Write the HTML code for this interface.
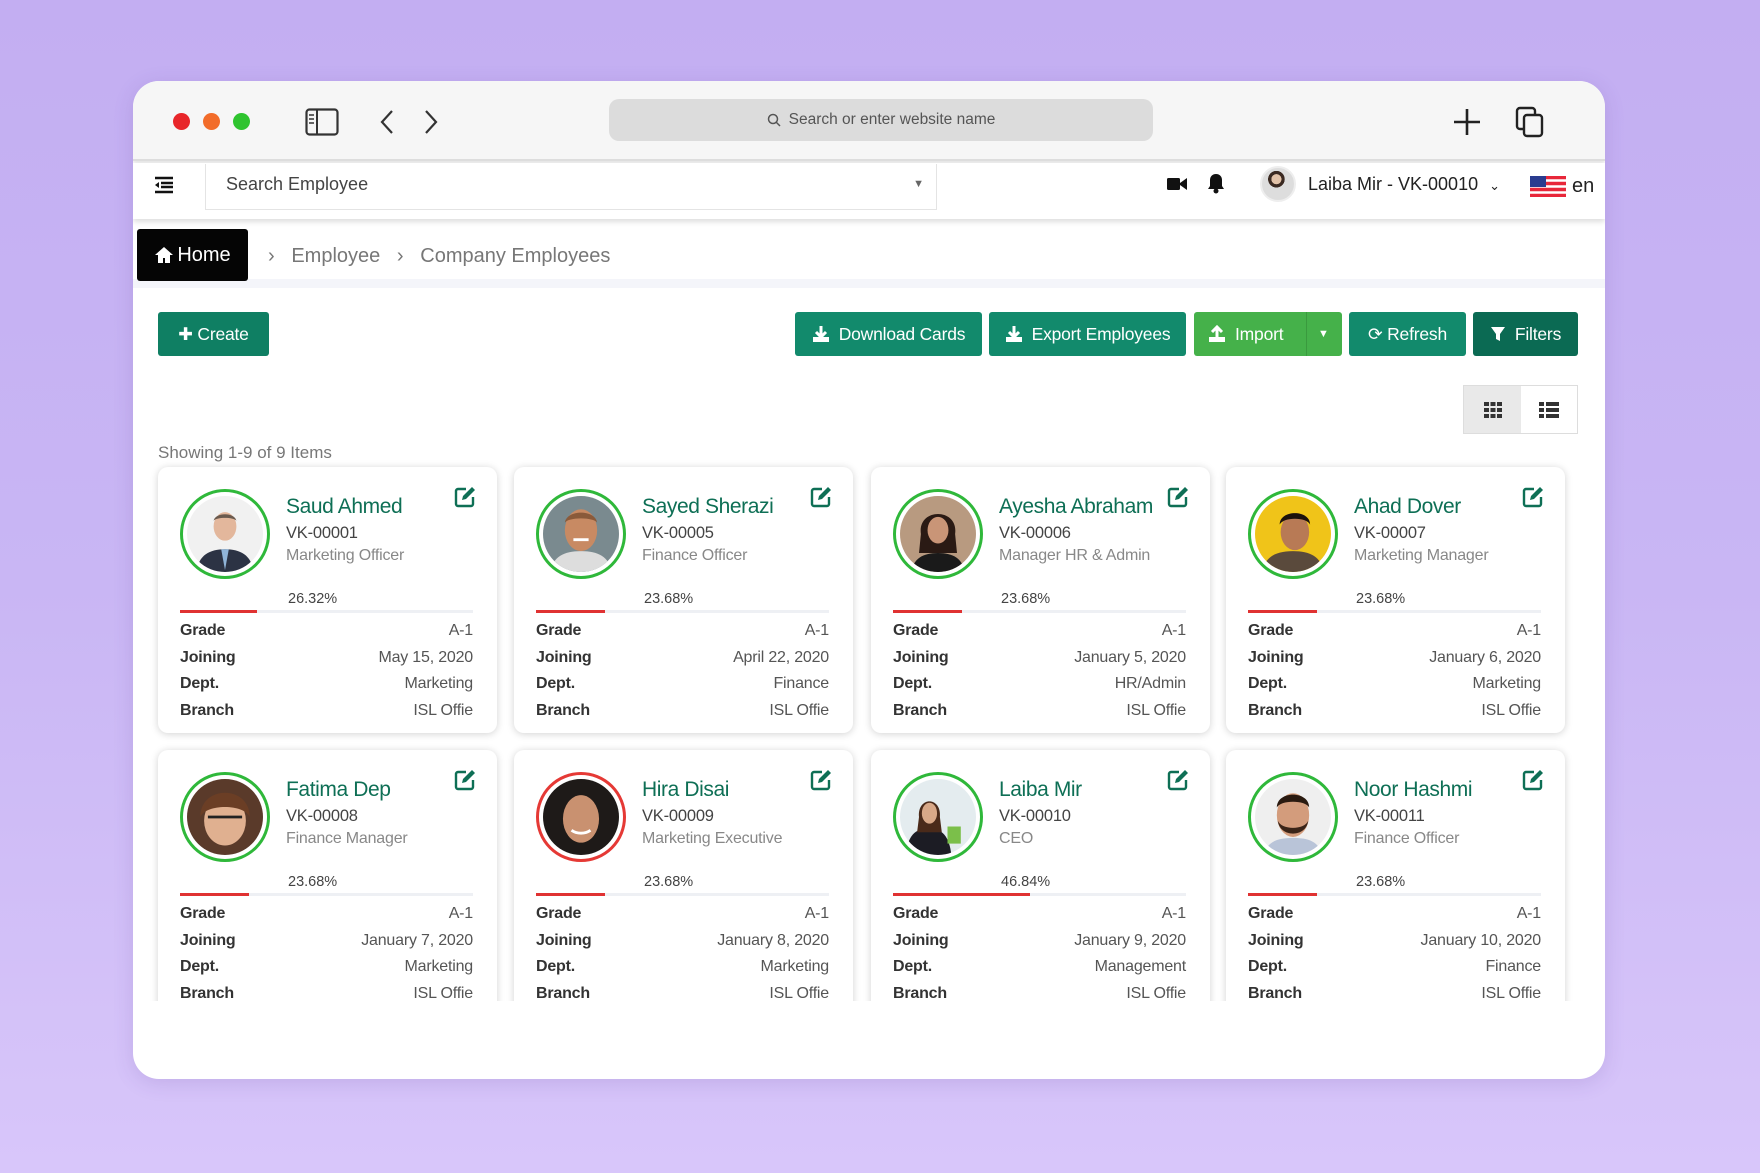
<!DOCTYPE html>
<html><head><meta charset="utf-8">
<style>
*{margin:0;padding:0;box-sizing:border-box}
body{width:1760px;height:1173px;overflow:hidden;position:relative;font-family:"Liberation Sans",sans-serif;background:linear-gradient(180deg,#c3aef2 0%,#c9b6f4 50%,#d8c6fa 100%)}
.abs{position:absolute}
.win{position:absolute;left:133px;top:81px;width:1472px;height:998px;background:#fff;border-radius:26px;overflow:hidden;box-shadow:0 4px 20px rgba(80,50,140,.15)}
.tb{position:absolute;left:0;top:0;width:100%;height:80px;background:#f6f6f6;border-bottom:2px solid #ddd;box-shadow:0 2px 4px rgba(0,0,0,.12)}
.dot{position:absolute;width:17px;height:17px;border-radius:50%;top:32px}
.nav{position:absolute;left:0;top:82px;width:100%;height:56px;background:#fff;box-shadow:0 3px 5px rgba(0,0,0,.13)}
.btn{position:absolute;top:231px;height:44px;background:#128a6c;color:#fff;font-size:17.5px;letter-spacing:-0.2px;border-radius:3px;display:flex;align-items:center;justify-content:center;gap:9px}
.card{position:absolute;width:339px;height:266px;background:#fff;border-radius:10px;box-shadow:0 1px 8px rgba(0,0,0,.18)}
.av{position:absolute;left:22px;top:22px;width:90px;height:90px;border-radius:50%;border:3px solid #2fb83a;overflow:hidden;background:#fff;padding:4px}
.av.red{border-color:#e53935}
.av svg{width:100%;height:100%;border-radius:50%;display:block}
.nm{position:absolute;left:128px;top:28px;font-size:21px;letter-spacing:-0.4px;color:#0e6f55}
.id{position:absolute;left:128px;top:57px;font-size:16.5px;letter-spacing:-0.2px;color:#444}
.tt{position:absolute;left:128px;top:80px;font-size:16px;letter-spacing:-0.2px;color:#888}
.ed{position:absolute;left:296px;top:19px}
.pc{position:absolute;left:130px;top:124px;font-size:14.5px;color:#444}
.bar{position:absolute;left:22px;top:143px;width:293px;height:3px;background:#eef0f4}
.bar i{display:block;height:3px;background:#e03232}
.row{position:absolute;left:22px;width:293px;font-size:16px;letter-spacing:-0.2px;display:flex;justify-content:space-between;margin-top:3px}
.row b{font-weight:bold;color:#333}
.row span{color:#555}
</style></head><body>
<div class="win">
 <div class="tb">
  <div class="dot" style="left:40px;background:#e8262a"></div>
  <div class="dot" style="left:70px;background:#f26c2a"></div>
  <div class="dot" style="left:100px;background:#2fc42f"></div>
  <svg class="abs" style="left:172px;top:27px" width="34" height="28" viewBox="0 0 34 28"><rect x="1.5" y="1.5" width="31" height="25" rx="3" fill="none" stroke="#333" stroke-width="2.2"/><line x1="12" y1="2" x2="12" y2="26" stroke="#333" stroke-width="2"/><path d="M4 7h5M4 11h5M4 15h5" stroke="#333" stroke-width="1.5"/></svg>
  <svg class="abs" style="left:244px;top:27px" width="20" height="28"><path d="M15 3 L5 14 L15 25" fill="none" stroke="#333" stroke-width="2.2"/></svg>
  <svg class="abs" style="left:288px;top:27px" width="20" height="28"><path d="M5 3 L15 14 L5 25" fill="none" stroke="#333" stroke-width="2.2"/></svg>
  <div class="abs" style="left:476px;top:18px;width:544px;height:42px;background:#dcdcdc;border-radius:10px;font-size:15.5px;color:#555;display:flex;align-items:center;justify-content:center;gap:8px"><svg width="14" height="14"><circle cx="6" cy="6" r="4.5" fill="none" stroke="#555" stroke-width="1.5"/><path d="M9 9l4 4" stroke="#555" stroke-width="1.5"/></svg>Search or enter website name</div>
  <svg class="abs" style="left:1319px;top:26px" width="30" height="30"><path d="M15 2v26M2 15h26" stroke="#222" stroke-width="2.6"/></svg>
  <svg class="abs" style="left:1381px;top:25px" width="32" height="32"><rect x="3" y="2" width="18" height="21" rx="3" fill="none" stroke="#222" stroke-width="2.4"/><rect x="10" y="9" width="18" height="21" rx="3" fill="#f6f6f6" stroke="#222" stroke-width="2.4"/></svg>
 </div>
 <div class="nav">
  <svg class="abs" style="left:20px;top:12px" width="22" height="20"><path d="M2 3h18M8 8h12M8 12h12M2 17h18" stroke="#111" stroke-width="2.6"/><path d="M6 7l-4 3 4 3z" fill="#111"/></svg>
  <div class="abs" style="left:72px;top:1px;width:732px;height:46px;border:1px solid #e4e4e4;border-top:none;font-size:18px;color:#444;padding:10px 0 0 20px">Search Employee<span style="position:absolute;right:12px;top:14px;font-size:11px;color:#666">▼</span></div>
  <svg class="abs" style="left:1033px;top:12px" width="22" height="18"><rect x="1" y="3" width="13" height="12" rx="1.5" fill="#111"/><path d="M14 8l7-5v12l-7-5z" fill="#111"/></svg>
  <svg class="abs" style="left:1073px;top:9px" width="20" height="22"><path d="M10 2c-4 0-6 3-6 6v6l-2 3h16l-2-3V8c0-3-2-6-6-6z" fill="#111"/><circle cx="10" cy="19" r="2.5" fill="#111"/></svg>
  <div class="abs" style="left:1127px;top:3px;width:36px;height:36px;border-radius:50%;background:radial-gradient(circle at 45% 35%,#e2c2a8 0 18%,#3b2a22 19% 30%,#ddd 31%);border:2px solid #eee"></div>
  <div class="abs" style="left:1175px;top:11px;font-size:18px;color:#222">Laiba Mir - VK-00010 <span style="font-size:13px;margin-left:6px">⌄</span></div>
  <svg class="abs" style="left:1397px;top:13px" width="36" height="21"><rect width="36" height="21" fill="#e8273a"/><path d="M0 4.5h36M0 10.5h36M0 16.5h36" stroke="#fff" stroke-width="2.4"/><rect width="16" height="11" fill="#2a3c8f"/></svg>
  <div class="abs" style="left:1439px;top:12px;font-size:20px;color:#222">en</div>
 </div>
 <div class="abs" style="left:0;top:198px;width:100%;height:9px;background:#f4f5fa"></div>
 <div class="abs" style="left:4px;top:148px;width:111px;height:52px;background:#050505;border-radius:3px;color:#fff;font-size:20px;display:flex;align-items:center;justify-content:center;gap:3px"><svg width="20" height="18"><path d="M10 1L1 9h3v8h5v-5h2v5h5V9h3z" fill="#fff"/></svg>Home</div>
 <div class="abs" style="left:135px;top:164px;font-size:20px;color:#777">›&nbsp;&nbsp;&nbsp;Employee&nbsp;&nbsp;&nbsp;›&nbsp;&nbsp;&nbsp;Company Employees</div>

 <div class="btn" style="left:25px;width:111px;background:#0f7f63">✚ Create</div>
 <div class="btn" style="left:662px;width:187px"><svg width="18" height="18"><path d="M9 1v10M4 7l5 5 5-5" stroke="#fff" stroke-width="3" fill="none"/><path d="M1 12v5h16v-5" fill="#fff"/></svg>Download Cards</div>
 <div class="btn" style="left:856px;width:197px"><svg width="18" height="18"><path d="M9 1v10M4 7l5 5 5-5" stroke="#fff" stroke-width="3" fill="none"/><path d="M1 12v5h16v-5" fill="#fff"/></svg>Export Employees</div>
 <div class="btn" style="left:1061px;width:148px;background:#45b14a;justify-content:flex-start;padding-left:14px"><svg width="18" height="18"><path d="M9 12V3M4 7l5-5 5 5" stroke="#fff" stroke-width="3" fill="none"/><path d="M1 12v5h16v-5" fill="#fff"/></svg>Import<div style="position:absolute;left:112px;top:0;width:1px;height:44px;background:#3a9a3e"></div><span style="position:absolute;left:124px;font-size:11px">▼</span></div>
 <div class="btn" style="left:1216px;width:117px">⟳ Refresh</div>
 <div class="btn" style="left:1340px;width:105px;background:#0b6a53"><svg width="16" height="16"><path d="M1 1h14l-5 7v7l-4-2V8z" fill="#fff"/></svg>Filters</div>

 <div class="abs" style="left:1330px;top:304px;width:115px;height:49px;border:1px solid #ddd;display:flex">
  <div style="width:57px;height:100%;background:#e9e9e9;display:flex;align-items:center;justify-content:center"><svg width="18" height="16"><g fill="#333"><rect x="0" y="0" width="5" height="4"/><rect x="6.5" y="0" width="5" height="4"/><rect x="13" y="0" width="5" height="4"/><rect x="0" y="6" width="5" height="4"/><rect x="6.5" y="6" width="5" height="4"/><rect x="13" y="6" width="5" height="4"/><rect x="0" y="12" width="5" height="4"/><rect x="6.5" y="12" width="5" height="4"/><rect x="13" y="12" width="5" height="4"/></g></svg></div>
  <div style="flex:1;display:flex;align-items:center;justify-content:center"><svg width="20" height="16"><g fill="#333"><rect x="0" y="0" width="5" height="4"/><rect x="7" y="0" width="13" height="4"/><rect x="0" y="6" width="5" height="4"/><rect x="7" y="6" width="13" height="4"/><rect x="0" y="12" width="5" height="4"/><rect x="7" y="12" width="13" height="4"/></g></svg></div>
 </div>
 <div class="abs" style="left:25px;top:362px;font-size:17px;color:#777">Showing 1-9 of 9 Items</div>
</div>

<svg width="0" height="0" style="position:absolute">
 <defs>
 <symbol id="edit" viewBox="0 0 22 22"><path d="M12 3H4a2 2 0 0 0-2 2v13a2 2 0 0 0 2 2h13a2 2 0 0 0 2-2v-7" fill="none" stroke="#0e6f55" stroke-width="2.4"/><path d="M18 1l3 3-9 9-4 1 1-4z" fill="#0e6f55"/></symbol>
 </defs>
</svg>

<div class="abs" style="left:133px;top:450px;width:1472px;height:551px;overflow:hidden">
 <div class="card" style="left:25px;top:17px">
  <div class="av"><svg viewBox="0 0 80 80"><rect width="80" height="80" fill="#f1f1f1"/><path d="M10 80c2-18 14-24 30-24s28 6 30 24z" fill="#2c3344"/><path d="M36 56l4 22 4-22z" fill="#8fb4d8"/><ellipse cx="40" cy="32" rx="12" ry="15" fill="#e3b79c"/><path d="M28 26c2-9 22-9 24 0c-3-4-21-4-24 0z" fill="#6a5a4e"/></svg></div>
  <div class="nm">Saud Ahmed</div><div class="id">VK-00001</div><div class="tt">Marketing Officer</div>
  <svg class="ed" width="22" height="22"><use href="#edit"/></svg>
  <div class="pc">26.32%</div><div class="bar"><i style="width:26.32%"></i></div>
  <div class="row" style="top:152px"><b>Grade</b><span>A-1</span></div>
  <div class="row" style="top:179px"><b>Joining</b><span>May 15, 2020</span></div>
  <div class="row" style="top:205px"><b>Dept.</b><span>Marketing</span></div>
  <div class="row" style="top:232px"><b>Branch</b><span>ISL Offie</span></div>
 </div>
 <div class="card" style="left:381px;top:17px">
  <div class="av"><svg viewBox="0 0 80 80"><rect width="80" height="80" fill="#7a8a8f"/><path d="M8 80c2-16 14-22 32-22s30 6 32 22z" fill="#ddd"/><ellipse cx="40" cy="36" rx="17" ry="22" fill="#c88a63"/><path d="M23 28c2-14 32-14 34 0c-4-6-30-6-34 0z" fill="#8a5a3a"/><path d="M32 46h16" stroke="#fff" stroke-width="3"/></svg></div>
  <div class="nm">Sayed Sherazi</div><div class="id">VK-00005</div><div class="tt">Finance Officer</div>
  <svg class="ed" width="22" height="22"><use href="#edit"/></svg>
  <div class="pc">23.68%</div><div class="bar"><i style="width:23.68%"></i></div>
  <div class="row" style="top:152px"><b>Grade</b><span>A-1</span></div>
  <div class="row" style="top:179px"><b>Joining</b><span>April 22, 2020</span></div>
  <div class="row" style="top:205px"><b>Dept.</b><span>Finance</span></div>
  <div class="row" style="top:232px"><b>Branch</b><span>ISL Offie</span></div>
 </div>
 <div class="card" style="left:738px;top:17px">
  <div class="av"><svg viewBox="0 0 80 80"><rect width="80" height="80" fill="#b89a80"/><path d="M22 40c-4-28 40-28 36 0l2 20H20z" fill="#2a1a14"/><path d="M12 80c2-14 12-20 28-20s26 6 28 20z" fill="#1a1a1a"/><ellipse cx="40" cy="36" rx="11" ry="14" fill="#c99577"/></svg></div>
  <div class="nm">Ayesha Abraham</div><div class="id">VK-00006</div><div class="tt">Manager HR &amp; Admin</div>
  <svg class="ed" width="22" height="22"><use href="#edit"/></svg>
  <div class="pc">23.68%</div><div class="bar"><i style="width:23.68%"></i></div>
  <div class="row" style="top:152px"><b>Grade</b><span>A-1</span></div>
  <div class="row" style="top:179px"><b>Joining</b><span>January 5, 2020</span></div>
  <div class="row" style="top:205px"><b>Dept.</b><span>HR/Admin</span></div>
  <div class="row" style="top:232px"><b>Branch</b><span>ISL Offie</span></div>
 </div>
 <div class="card" style="left:1093px;top:17px">
  <div class="av"><svg viewBox="0 0 80 80"><rect width="80" height="80" fill="#f0c419"/><path d="M8 80c2-16 14-22 32-22s30 6 32 22z" fill="#5a4a3c"/><ellipse cx="42" cy="38" rx="15" ry="19" fill="#b87a55"/><path d="M26 30c0-16 32-16 32 0c-4-8-28-8-32 0z" fill="#1c120c"/></svg></div>
  <div class="nm">Ahad Dover</div><div class="id">VK-00007</div><div class="tt">Marketing Manager</div>
  <svg class="ed" width="22" height="22"><use href="#edit"/></svg>
  <div class="pc">23.68%</div><div class="bar"><i style="width:23.68%"></i></div>
  <div class="row" style="top:152px"><b>Grade</b><span>A-1</span></div>
  <div class="row" style="top:179px"><b>Joining</b><span>January 6, 2020</span></div>
  <div class="row" style="top:205px"><b>Dept.</b><span>Marketing</span></div>
  <div class="row" style="top:232px"><b>Branch</b><span>ISL Offie</span></div>
 </div>
 <div class="card" style="left:25px;top:300px">
  <div class="av"><svg viewBox="0 0 80 80"><rect width="80" height="80" fill="#5a3a2a"/><ellipse cx="40" cy="44" rx="22" ry="26" fill="#e0b090"/><path d="M22 40h36" stroke="#222" stroke-width="3"/><path d="M14 40c0-34 52-34 52 0c-6-14-46-14-52 0z" fill="#6b3e25"/></svg></div>
  <div class="nm">Fatima Dep</div><div class="id">VK-00008</div><div class="tt">Finance Manager</div>
  <svg class="ed" width="22" height="22"><use href="#edit"/></svg>
  <div class="pc">23.68%</div><div class="bar"><i style="width:23.68%"></i></div>
  <div class="row" style="top:152px"><b>Grade</b><span>A-1</span></div>
  <div class="row" style="top:179px"><b>Joining</b><span>January 7, 2020</span></div>
  <div class="row" style="top:205px"><b>Dept.</b><span>Marketing</span></div>
  <div class="row" style="top:232px"><b>Branch</b><span>ISL Offie</span></div>
 </div>
 <div class="card" style="left:381px;top:300px">
  <div class="av red"><svg viewBox="0 0 80 80"><rect width="80" height="80" fill="#1e1a18"/><ellipse cx="40" cy="42" rx="19" ry="25" fill="#c99170"/><path d="M30 54c6 4 14 4 20 0" stroke="#fff" stroke-width="3" fill="none"/></svg></div>
  <div class="nm">Hira Disai</div><div class="id">VK-00009</div><div class="tt">Marketing Executive</div>
  <svg class="ed" width="22" height="22"><use href="#edit"/></svg>
  <div class="pc">23.68%</div><div class="bar"><i style="width:23.68%"></i></div>
  <div class="row" style="top:152px"><b>Grade</b><span>A-1</span></div>
  <div class="row" style="top:179px"><b>Joining</b><span>January 8, 2020</span></div>
  <div class="row" style="top:205px"><b>Dept.</b><span>Marketing</span></div>
  <div class="row" style="top:232px"><b>Branch</b><span>ISL Offie</span></div>
 </div>
 <div class="card" style="left:738px;top:300px">
  <div class="av"><svg viewBox="0 0 80 80"><rect width="80" height="80" fill="#e4ecef"/><path d="M6 80c2-20 10-28 24-28s22 8 24 28z" fill="#1c1c24"/><path d="M20 40c-2-22 24-22 22 0l2 16H18z" fill="#4a2a1a"/><ellipse cx="31" cy="36" rx="8" ry="11" fill="#d8a888"/><rect x="50" y="50" width="14" height="18" fill="#7bbf4a"/></svg></div>
  <div class="nm">Laiba Mir</div><div class="id">VK-00010</div><div class="tt">CEO</div>
  <svg class="ed" width="22" height="22"><use href="#edit"/></svg>
  <div class="pc">46.84%</div><div class="bar"><i style="width:46.84%"></i></div>
  <div class="row" style="top:152px"><b>Grade</b><span>A-1</span></div>
  <div class="row" style="top:179px"><b>Joining</b><span>January 9, 2020</span></div>
  <div class="row" style="top:205px"><b>Dept.</b><span>Management</span></div>
  <div class="row" style="top:232px"><b>Branch</b><span>ISL Offie</span></div>
 </div>
 <div class="card" style="left:1093px;top:300px">
  <div class="av"><svg viewBox="0 0 80 80"><rect width="80" height="80" fill="#efefef"/><path d="M10 80c2-14 14-18 30-18s28 4 30 18z" fill="#b9c4d8"/><ellipse cx="40" cy="38" rx="17" ry="23" fill="#d39c7c"/><path d="M24 44c2 18 30 18 32 0c-4 10-28 10-32 0z" fill="#3a2418"/><path d="M23 30c0-18 34-18 34 0c-4-8-30-8-34 0z" fill="#2a1a10"/></svg></div>
  <div class="nm">Noor Hashmi</div><div class="id">VK-00011</div><div class="tt">Finance Officer</div>
  <svg class="ed" width="22" height="22"><use href="#edit"/></svg>
  <div class="pc">23.68%</div><div class="bar"><i style="width:23.68%"></i></div>
  <div class="row" style="top:152px"><b>Grade</b><span>A-1</span></div>
  <div class="row" style="top:179px"><b>Joining</b><span>January 10, 2020</span></div>
  <div class="row" style="top:205px"><b>Dept.</b><span>Finance</span></div>
  <div class="row" style="top:232px"><b>Branch</b><span>ISL Offie</span></div>
 </div>
</div>
</body></html>
